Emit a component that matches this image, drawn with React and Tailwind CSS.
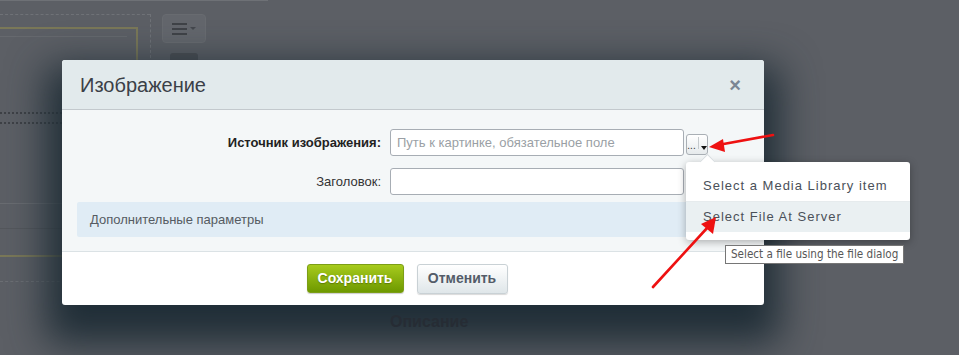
import React from 'react';

const font = { fontFamily: '"Liberation Sans", Arial, sans-serif' };

const Backdrop = () => (
  <div className="absolute inset-0 bg-[#5c5f65]">
    {/* dimmed page behind the modal */}
    <div className="flex">
      <div className="w-[150px] pt-[14px]">
        <div className="h-[13px] border-t border-dashed border-[#6f7277]" />
        <div className="w-[138px] h-[230px] border-2 border-t-2 border-l-0 border-[#7a7858] mt-0">
          <div className="h-[8px] border-b border-[#66696e] mr-[9px]" />
        </div>
      </div>
      <div className="border-l border-dashed border-[#6f7277] h-[80px] mt-[14px]" />
      <div className="pl-[11px] pt-[14px] flex flex-col gap-[10px]">
        <div className="w-[44px] h-[29px] rounded-[4px] bg-[#63666c] border border-[#686b70] flex items-center justify-center gap-[3px]">
          <div className="flex flex-col gap-[3px]">
            <div className="w-[15px] h-[2px] bg-[#3f4247]" />
            <div className="w-[15px] h-[2px] bg-[#3f4247]" />
            <div className="w-[15px] h-[2px] bg-[#3f4247]" />
          </div>
          <div className="w-0 h-0 border-x-[3px] border-x-transparent border-t-[3px] border-t-[#45484d]" />
        </div>
        <div className="ml-[8px] w-[28px] h-[20px] rounded-[3px] bg-[#4b4e53]" />
      </div>
    </div>
    <div className="absolute left-0 top-0 w-[268px] h-px bg-[#6e7176]" />
    <div className="absolute left-0 top-[112px] w-[70px] h-[12px] border-y-2 border-dotted border-[#3e4146]" />
    <div className="absolute left-0 top-[203px] w-[70px] h-px bg-[#696c71]" />
    <div className="absolute left-0 top-[228px] w-[70px] h-px bg-[#54575c]" />
    <div className="absolute left-0 top-[281px] w-[70px] border-t border-dashed border-[#6c6f74]" />
  </div>
);

const Arrows = () => (
  <svg className="absolute inset-0 pointer-events-none" width="959" height="355">
    <line x1="773" y1="135" x2="718" y2="145" stroke="#ee1111" strokeWidth="2.6" strokeLinecap="round" />
    <polygon points="709,147 723,139 725,152" fill="#ee1111" />
    <line x1="653" y1="287" x2="708" y2="227" stroke="#ee1111" strokeWidth="2.6" strokeLinecap="round" />
    <polygon points="716,217 713,234 701,224" fill="#ee1111" />
  </svg>
);

const Dialog = () => (
  <div className="absolute left-[62px] top-[60px] w-[702px] rounded-[3px] bg-white shadow-[0_22px_38px_16px_rgba(30,44,54,0.97)] overflow-hidden" style={font}>
    <div className="h-[50px] bg-[#e2eaec] border-b border-[#c3c9cd] flex items-center justify-between pl-[18px] pr-[23px]">
      <span className="text-[20px] text-[#3b4047]">Изображение</span>
      <span className="text-[20px] font-bold text-[#7b8694] leading-none">×</span>
    </div>
    <div className="bg-[#f4f7f8] pt-[19px] pb-[14px] border-b border-[#dbe2e5]">
      <div className="flex items-center">
        <div className="w-[319px] text-right text-[13px] font-bold text-[#222]">Источник изображения:</div>
        <div className="ml-[9px] w-[294px] h-[27px] bg-white border border-[#a7adb4] rounded-[3px] px-[6px] flex items-center text-[13px] text-[#9a9fa5]">
          Путь к картинке, обязательное поле
        </div>
        <div className="ml-[2px] mt-[3px] w-[22px] h-[21px] rounded-[3px] border border-[#a9afb5] bg-gradient-to-b from-white to-[#e6eaec] flex items-end justify-center pb-[3px] gap-[2px]">
          <span className="text-[10px] leading-none text-[#333]">...</span>
          <div className="w-px h-[12px] bg-[#c5cacd] self-center" />
          <div className="w-0 h-0 border-x-[3px] border-x-transparent border-t-[4px] border-t-[#111] mb-[1px]" />
        </div>
      </div>
      <div className="flex items-center mt-[12px]">
        <div className="w-[319px] text-right text-[13px] text-[#333]">Заголовок:</div>
        <div className="ml-[9px] w-[294px] h-[27px] bg-white border border-[#a7adb4] rounded-[3px]" />
      </div>
      <div className="mt-[7px] mx-[15px] h-[35px] bg-[#e0ecf5] rounded-[2px] flex items-center px-[13px] text-[13px] text-[#555b62]">
        Дополнительные параметры
      </div>
    </div>
    <div className="h-[53px] flex items-center justify-center gap-[13px] pr-[12px]">
      <button className="w-[97px] h-[29px] rounded-[3px] bg-gradient-to-b from-[#a7cb1c] to-[#6e9900] border border-[#7c9e16] text-white text-[14px] font-bold [text-shadow:0_1px_1px_rgba(60,80,0,0.5)] shadow-[0_1px_1px_rgba(0,0,0,0.2)]">
        Сохранить
      </button>
      <button className="w-[91px] h-[30px] rounded-[3px] bg-gradient-to-b from-white to-[#dfe6e9] border border-[#c9d1d5] text-[#535c69] text-[14px] font-bold shadow-[0_1px_1px_rgba(0,0,0,0.15)]">
        Отменить
      </button>
    </div>
  </div>
);

const Menu = () => (
  <div className="absolute left-[686px] top-[162px] w-[224px] bg-white rounded-[3px] shadow-[0_2px_8px_rgba(0,0,0,0.3)] pt-[9px] pb-[8px]" style={font}>
    <div className="absolute -top-[6px] left-[16px] w-[11px] h-[11px] bg-white rotate-45 border-l border-t border-[#d8dde0]" />
    <div className="h-[31px] flex items-center pl-[17px] text-[13px] tracking-[1px] text-[#4a5059] border-b border-[#e6ebed]">
      Select a Media Library item
    </div>
    <div className="h-[30px] flex items-center pl-[17px] text-[13px] tracking-[1px] text-[#4a5059] bg-[#eaf0f2]">
      Select File At Server
    </div>
  </div>
);

const Tooltip = () => (
  <div className="absolute left-[725px] top-[245px] h-[19px] px-[5px] flex items-center bg-white border border-[#767676] text-[11.6px] text-[#575757]" style={{ fontFamily: '"DejaVu Sans Condensed", "Liberation Sans", sans-serif' }}>
    Select a file using the file dialog
  </div>
);

const Behind = () => (
  <div className="absolute left-[390px] top-[310px] text-[16px] font-bold text-[#262c34]" style={font}>Описание</div>
);

export default function App() {
  return (
    <div className="relative w-[959px] h-[355px] overflow-hidden">
      <Backdrop />
      <Dialog />
      <Behind />
      <Menu />
      <Tooltip />
      <Arrows />
    </div>
  );
}
